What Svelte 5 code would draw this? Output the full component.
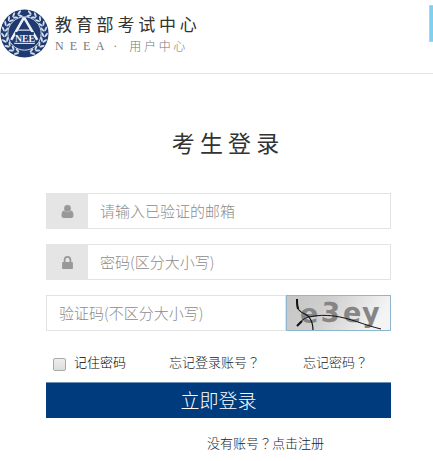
<script lang="ts">
	let email = $state('');
	let password = $state('');
	let captcha = $state('');
	let remember = $state(false);

	// angles of the leaves along one side of the wreath
	const leaves = [18, 34, 50, 66, 82, 98, 114, 130, 146, 162];
</script>

<header class="header">
	<a href="/" class="brand">
		<svg class="seal" viewBox="0 0 50 50" aria-hidden="true">
			<circle cx="25" cy="25" r="24.5" fill="#1f3a70" />
			<g fill="#d5dfed">
				{#each leaves as angle}
					<g transform="rotate({angle} 25 25)">
						<ellipse cx="23.5" cy="3" rx="2.7" ry="1" transform="rotate(32 23.5 3)" />
						<ellipse cx="23.5" cy="6.400" rx="2.6" ry="1" transform="rotate(-32 23.5 6.400)" />
					</g>
					<g transform="rotate({-angle} 25 25)">
						<ellipse cx="26.5" cy="3" rx="2.7" ry="1" transform="rotate(-32 26.5 3)" />
						<ellipse cx="26.5" cy="6.400" rx="2.6" ry="1" transform="rotate(32 26.5 6.400)" />
					</g>
				{/each}
			</g>
			<circle cx="25" cy="25" r="17" fill="#1f3a70" stroke="#d5dfed" stroke-width="1" />
			<path d="M24.500 8.500 11.500 31.500M24.500 8.500 38 31.500" fill="none" stroke="#eef2f8" stroke-width="2.6" />
			<path d="M18 21.500h14M14.500 35h21" fill="none" stroke="#d5dfed" stroke-width="1.2" />
			<rect x="15.500" y="23.500" width="19" height="10.500" fill="#1f3a70" />
			<text x="25.5" y="33.5" text-anchor="middle" class="seal-text">NEE</text>
		</svg>
		<span class="brand-text">
			<span class="brand-name">教 育 部 考 试 中 心</span>
			<span class="brand-sub">
				<span class="latin">N&nbsp; E&nbsp; E&nbsp; A&nbsp;&nbsp; ·</span>
				<span>用 户 中 心</span>
			</span>
		</span>
	</a>
	<button type="button" class="menu" aria-label="菜单"></button>
</header>

<main>
	<h1>考 生 登 录</h1>

	<form onsubmit={(e) => e.preventDefault()}>
		<div class="field">
			<label for="email" aria-label="邮箱">
				<svg width="13" height="13" viewBox="0 0 12 13" fill="#999">
					<circle cx="6" cy="3.4" r="3.4" />
					<path d="M2.600 5.600C.8 5.800 0 7.600 0 10.600 0 12.100.8 13 2.200 13h7.600c1.400 0 2.200-.9 2.200-2.400 0-3-.8-4.800-2.600-5C7.600 7.800 4.400 7.800 2.600 5.600z" />
				</svg>
			</label>
			<input id="email" type="text" placeholder="请输入已验证的邮箱" bind:value={email} />
		</div>

		<div class="field">
			<label for="password" aria-label="密码">
				<svg width="11" height="13" viewBox="0 0 10 12" fill="#999">
					<path d="M1.500 5.500V3.500a3.500 3.500 0 0 1 7 0v2h.7c.5 0 .8.300.8.800v4.900c0 .5-.3.800-.8.800H.8c-.5 0-.8-.3-.8-.8V6.300c0-.5.300-.8.800-.8zM3.200 5.500h3.600v-2a1.800 1.800 0 0 0-3.600 0z" />
				</svg>
			</label>
			<input id="password" type="password" placeholder="密码(区分大小写)" bind:value={password} />
		</div>

		<div class="field">
			<input type="text" aria-label="验证码" placeholder="验证码(不区分大小写)" bind:value={captcha} />
			<button type="button" class="captcha" aria-label="换一张验证码">
				<svg viewBox="0 0 103 34">
					<defs>
						<linearGradient id="shade" x1="0" y1="0" x2="1" y2="0.2">
							<stop offset="0" stop-color="#c6c6c6" />
							<stop offset="0.4" stop-color="#cecece" />
							<stop offset="1" stop-color="#f4f4f4" />
						</linearGradient>
					</defs>
					<rect width="103" height="34" fill="url(#shade)" />
					<g class="captcha-text">
						<text x="13" y="27">e</text>
						<text x="34" y="26" transform="rotate(4 44 18)">3</text>
						<text x="56" y="26" transform="rotate(4 66 20)">e</text>
						<text x="75" y="26">y</text>
					</g>
					<path d="M10 3c0 5 0 8 2 11 3 4 8 4 10 7 3 4 4 8 4 13" fill="none" stroke="#111" stroke-width="1.200" />
					<path d="M10 30c4-5 7-8 12-9 8-2 17-2 25-1 16 2 30 9 47 13" fill="none" stroke="#111" stroke-width="1" />
					<path d="M10 3c0 4 0 7 1 10M10 30l5-5" fill="none" stroke="#111" stroke-width="2" />
				</svg>
			</button>
		</div>

		<div class="options">
			<label class="remember">
				<input type="checkbox" bind:checked={remember} />
				记住密码
			</label>
			<a href="/forgot-account">忘记登录账号<span class="mark" lang="zh-TW">？</span></a>
			<a href="/forgot-password">忘记密码<span class="mark" lang="zh-TW">？</span></a>
		</div>

		<button type="submit" class="submit">立即登录</button>
	</form>

	<p class="register">
		<a href="/register">没有账号<span class="mark" lang="zh-TW">？</span>点击注册</a>
	</p>
</main>

<style>
	:global(body) {
		margin: 0;
		background: #fff;
		color: #222;
		font-family: 'Noto Sans CJK SC', sans-serif;
		font-weight: 300;
	}

	a {
		color: inherit;
		text-decoration: none;
	}

	button,
	input {
		font: inherit;
		box-sizing: border-box;
		border-radius: 0;
	}

	.header {
		display: flex;
		justify-content: space-between;
		align-items: flex-start;
		padding-top: 5px;
		border-bottom: 1px solid #e3e3e3;
	}

	.brand {
		display: flex;
		align-items: flex-start;
		gap: 6px;
		padding: 4px 0 15px;
	}

	.seal {
		display: block;
		width: 49px;
		height: 49px;
	}

	.seal-text {
		font: 700 10px 'Liberation Serif', serif;
		fill: #eef2f8;
	}

	.brand-text {
		display: flex;
		flex-direction: column;
		padding-top: 3px;
		white-space: nowrap;
	}

	.brand-name {
		font-size: 17px;
		line-height: 24px;
		font-weight: 400;
		color: #333;
	}

	.brand-sub {
		display: flex;
		gap: 12px;
		font-size: 12px;
		line-height: 20px;
		color: #777;
	}

	.latin {
		font-family: 'Liberation Serif', serif;
	}

	.menu {
		width: 4px;
		height: 37px;
		padding: 0;
		border: 1px solid #9bdcf3;
		border-right: 0;
		background: #7fcfee;
	}

	main {
		padding: 50px 42px 8px 46px;
	}

	h1 {
		margin: 0 0 33px;
		padding-left: 14px;
		font-size: 23px;
		line-height: 36px;
		font-weight: 400;
		color: #333;
		text-align: center;
	}

	.field {
		display: flex;
		height: 36px;
		margin-bottom: 15px;
	}

	.field label {
		display: flex;
		align-items: center;
		justify-content: center;
		width: 42px;
		background: #e5e5e5;
	}

	.field input {
		flex: 1;
		min-width: 0;
		padding: 0 12px 2px;
		border: 1px solid #e3e3e3;
		background: #fff;
		font-size: 15px;
		outline: none;
	}

	.field label + input {
		border-left: 0;
	}

	.field input::placeholder {
		color: #8c8c8c;
		opacity: 1;
	}

	.captcha {
		width: 105px;
		padding: 0;
		border: 1px solid #8fb6cf;
		background: none;
	}

	.captcha svg {
		display: block;
		width: 100%;
		height: 100%;
	}

	.captcha-text {
		font: 700 27px 'DejaVu Sans', sans-serif;
		fill: #858585;
	}

	.options {
		display: flex;
		align-items: center;
		justify-content: space-between;
		padding: 0 23px 4px 7px;
		font-size: 13px;
		line-height: 32px;
	}

	.mark {
		font-family: 'Noto Sans CJK TC', sans-serif;
	}

	.remember {
		display: flex;
		align-items: center;
		gap: 8px;
		color: #000;
	}

	.remember input {
		appearance: none;
		width: 13px;
		height: 13px;
		margin: 4px 0 0;
		border: 1px solid #aaa;
		border-radius: 2px;
		background: linear-gradient(#eee, #ddd);
	}

	.remember input:checked {
		background: #003c7d;
	}

	.submit {
		display: block;
		width: 100%;
		height: 36px;
		padding: 0 0 2px;
		border: 0;
		border-top: 1px solid #6c91b5;
		background: #003c7d;
		color: #fff;
		font-size: 19px;
	}

	.register {
		margin: 13px 0 0;
		padding-left: 94px;
		font-size: 13px;
		line-height: 24px;
		text-align: center;
	}
</style>
